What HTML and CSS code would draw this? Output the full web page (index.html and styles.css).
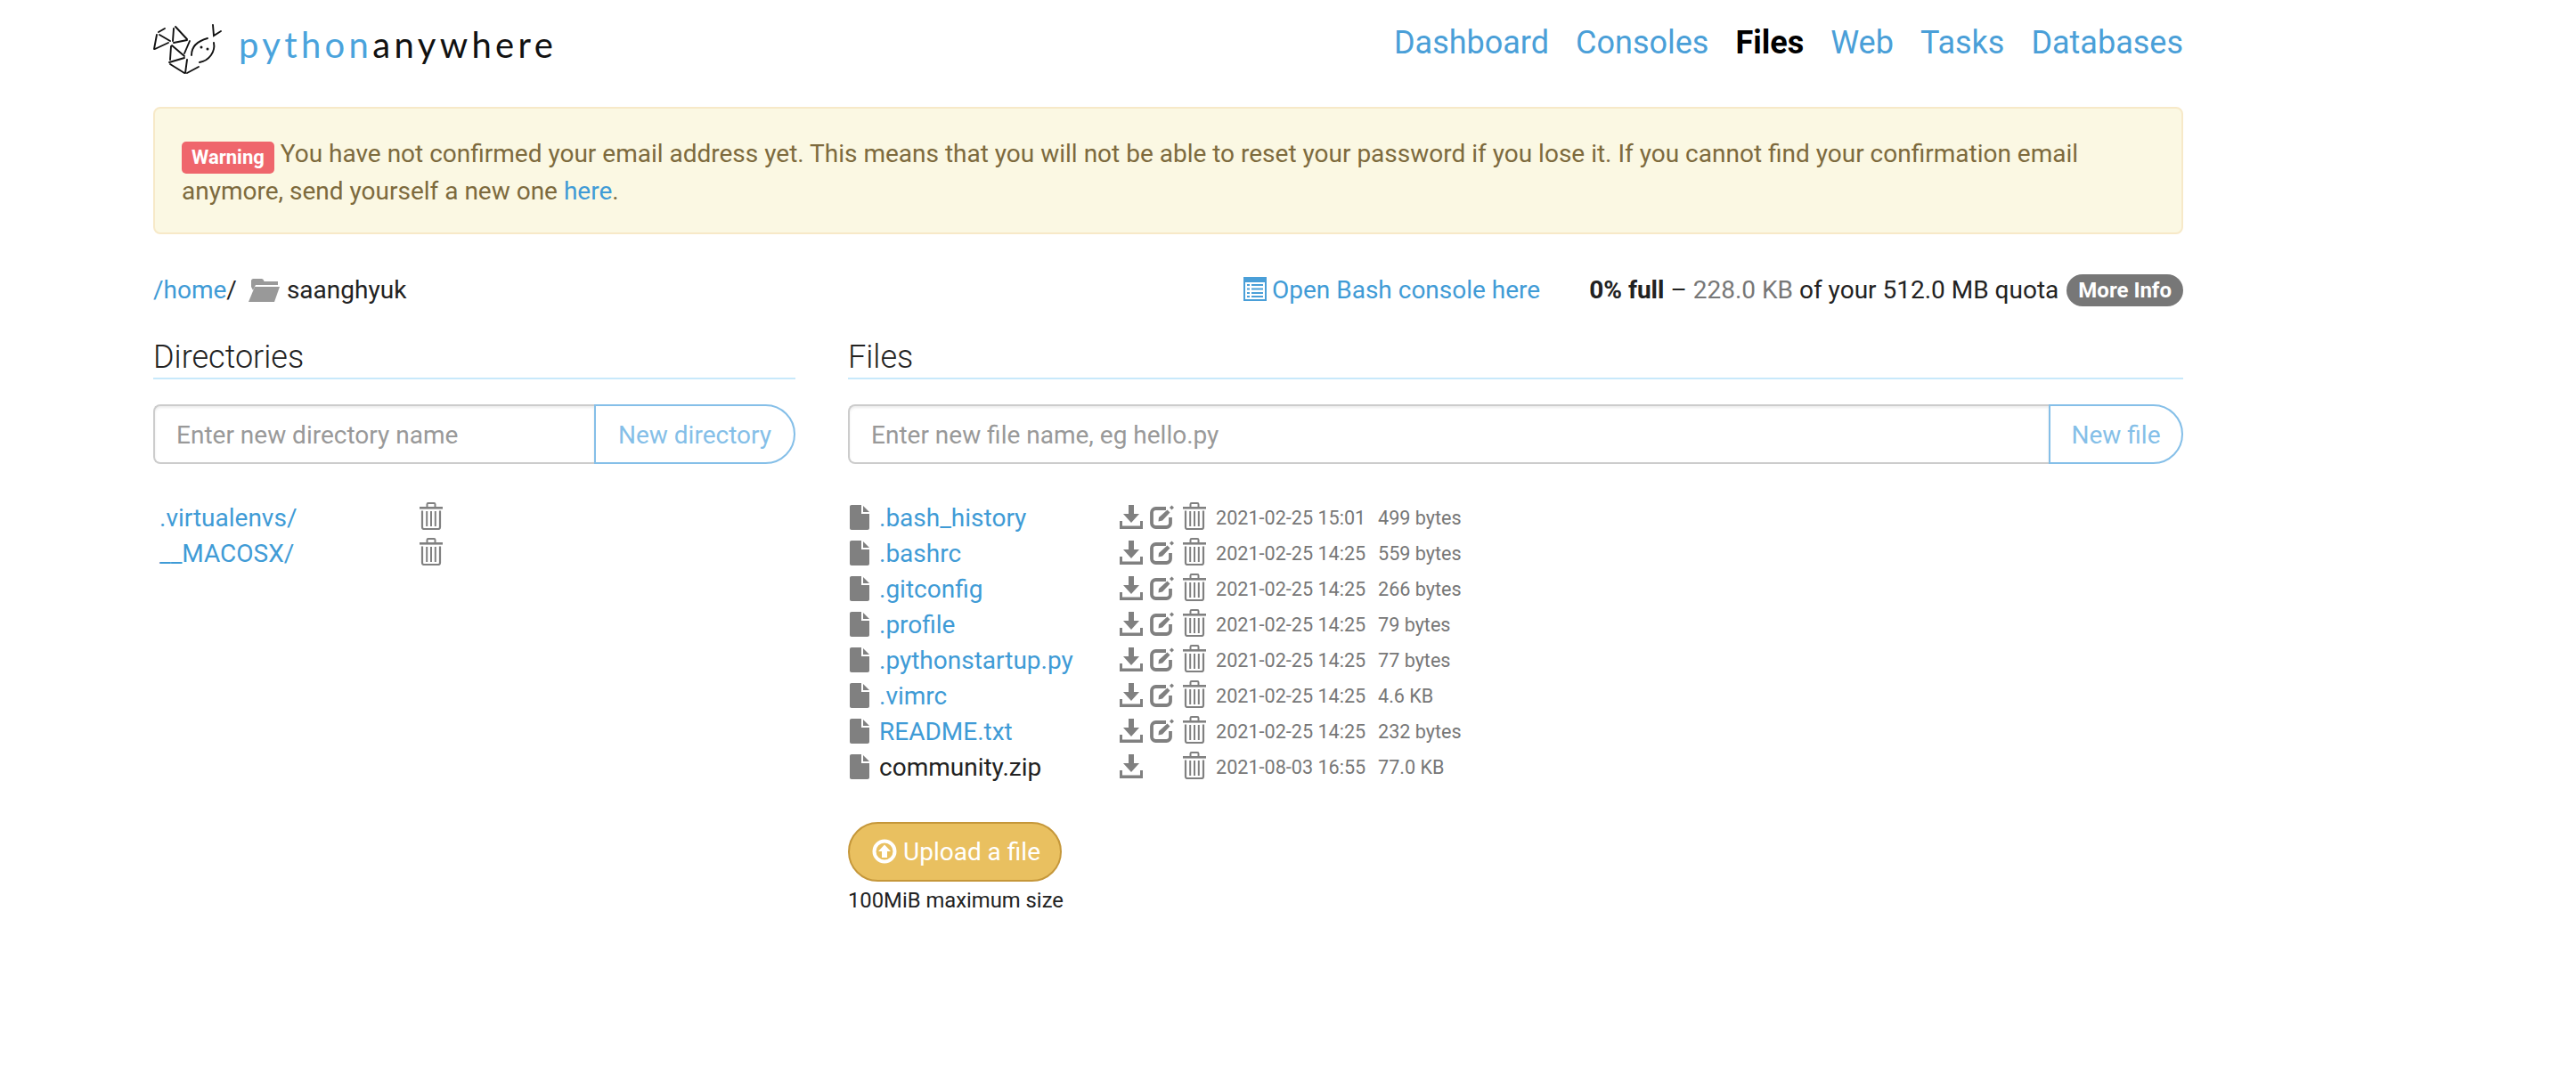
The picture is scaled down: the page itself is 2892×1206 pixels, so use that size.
FILE: index.html
```html
<!DOCTYPE html>
<html lang="en">
<head>
<meta charset="utf-8">
<title>Files - PythonAnywhere</title>
<link rel="stylesheet" href="styles.css">
</head>
<body>
<svg class="defs" width="0" height="0" aria-hidden="true">
  <symbol id="i-trash" viewBox="0 0 26 31">
    <path d="M8.500 5V2.200C8.500 1.400 9 1 9.800 1h6.400c.8 0 1.300.4 1.300 1.200V5" fill="none" stroke="currentColor" stroke-width="2"/>
    <rect x="0" y="5" width="26" height="2.600"/>
    <path d="M3 9.500V28c0 1.300.8 2 2 2h16c1.200 0 2-.7 2-2V9.500" fill="none" stroke="currentColor" stroke-width="2.200"/>
    <rect x="7.200" y="10" width="2" height="17"/><rect x="12" y="10" width="2" height="17"/><rect x="16.800" y="10" width="2" height="17"/>
  </symbol>
  <symbol id="i-download" viewBox="0 0 26 27">
    <path d="M10 0h6v10h6L13 20 4 10h6z"/>
    <path d="M0 18h3v5.500h20V18h3v9H0z"/>
  </symbol>
  <symbol id="i-edit" viewBox="0 0 30 27">
    <path d="M19 4H7.500A4.500 4.500 0 0 0 3 8.500v12A4.500 4.500 0 0 0 7.500 25h12a4.500 4.500 0 0 0 4.500-4.500V14" fill="none" stroke="currentColor" stroke-width="3.800"/>
    <path d="M11 14l9.500-8.500 3 3L15 17.500l-4.500 1z"/>
    <path d="M25.500 5.500l-2.500-2.500 2.500-2.500 2.500 2.500z"/>
  </symbol>
  <symbol id="i-file" viewBox="0 0 22 28">
    <path d="M0 2C0 .8.8 0 2 0h11v10h9v16c0 1.200-.8 2-2 2H2c-1.200 0-2-.8-2-2z"/>
    <path d="M15 1l7 7h-7z"/>
  </symbol>
  <symbol id="i-folder" viewBox="0 0 35 26">
    <path d="M3 7V2.500C3 1 4 0 5.500 0h9C16 0 17 1 17.500 3H33v4H8L5 13 3 9z"/>
    <path d="M7 9h28l-6 17H0z"/>
  </symbol>
  <symbol id="i-list" viewBox="0 0 26 27">
    <path fill-rule="evenodd" d="M0 0h26v27H0zM2 6v19h22V6z"/>
    <path d="M4 8h3v2H4zM9 8h13v2H9zM4 12.500h3v2H4zM9 12.500h13v2H9zM4 17h3v2H4zM9 17h13v2H9zM4 21h3v2H4zM9 21h13v2H9z"/>
  </symbol>
  <symbol id="i-up" viewBox="0 0 28 28">
    <circle cx="14" cy="14" r="11.500" fill="none" stroke="currentColor" stroke-width="4"/>
    <path d="M14 6.500l7 7.500h-4v7h-6v-7H7z"/>
  </symbol>
</svg>

<div class="page">
  <header class="topbar">
    <a class="brand" href="#">
      <svg class="brand-mark" viewBox="0 0 100 70" aria-hidden="true">
        <g fill="none" stroke="#111" stroke-width="1.900" stroke-linecap="round">
          <path d="M13 16L20 12M11 19L8 35M9 35L24 28M14 19L26 26"/>
          <path d="M32 10L45 24M30 12L29 26M30 28L45 25"/>
          <path d="M48 26L42 40M28 31L42 43M27 32L26 47"/>
          <path d="M25 50L42 45M26 52L42 62M45 47L43 62M45 62L58 55"/>
          <path d="M50 42C50 32 57 26 68 23"/>
          <path d="M75 28C77 38 70 48 59 50"/>
          <path d="M74 8L75 20L83 15"/>
        </g>
        <circle cx="61" cy="33" r="1.500" fill="#111"/>
        <circle cx="68" cy="35" r="1.500" fill="#111"/>
      </svg>
      <span class="brand-name"><span class="brand-python">python</span><span class="brand-any">anywhere</span></span>
    </a>
    <nav class="mainnav">
      <a href="#">Dashboard</a>
      <a href="#">Consoles</a>
      <a href="#" class="current">Files</a>
      <a href="#">Web</a>
      <a href="#">Tasks</a>
      <a href="#">Databases</a>
    </nav>
  </header>

  <div class="alert">
    <span class="label-warning">Warning</span> <span>You have not confirmed your email address yet. This means that you will not be able to reset your password if you lose it. If you cannot find your confirmation email</span><br>
    <span>anymore, send yourself a new one</span> <a href="#">here</a>.
  </div>

  <div class="pathbar">
    <div class="crumbs">
      <a href="#">/home</a><span class="sep">/</span>
      <svg class="icon-folder"><use href="#i-folder"/></svg>
      <span>saanghyuk</span>
    </div>
    <div class="pathbar-right">
      <a class="bash" href="#"><svg class="icon-list"><use href="#i-list"/></svg>Open Bash console here</a>
      <div class="quota"><strong>0% full</strong> – <span class="muted">228.0 KB</span> of your 512.0 MB quota<a class="badge" href="#">More Info</a></div>
    </div>
  </div>

  <main class="columns">
    <section>
      <h2 class="section-title">Directories</h2>
      <form class="addform">
        <input class="addinput" type="text" placeholder="Enter new directory name">
        <button class="addbtn dirbtn" type="button">New directory</button>
      </form>
      <ul class="dirlist">
        <li class="dirrow"><a href="#">.virtualenvs/</a><svg class="ic ic-trash"><use href="#i-trash"/></svg></li>
        <li class="dirrow"><a href="#">__MACOSX/</a><svg class="ic ic-trash"><use href="#i-trash"/></svg></li>
      </ul>
    </section>

    <section>
      <h2 class="section-title">Files</h2>
      <form class="addform">
        <input class="addinput" type="text" placeholder="Enter new file name, eg hello.py">
        <button class="addbtn filebtn" type="button">New file</button>
      </form>
      <ul class="filelist">
        <li class="filerow"><svg class="ic ic-file"><use href="#i-file"/></svg><a href="#">.bash_history</a><svg class="ic ic-dl"><use href="#i-download"/></svg><svg class="ic ic-edit"><use href="#i-edit"/></svg><svg class="ic ic-trash"><use href="#i-trash"/></svg><span class="meta">2021-02-25 15:01</span><span class="meta">499 bytes</span></li>
        <li class="filerow"><svg class="ic ic-file"><use href="#i-file"/></svg><a href="#">.bashrc</a><svg class="ic ic-dl"><use href="#i-download"/></svg><svg class="ic ic-edit"><use href="#i-edit"/></svg><svg class="ic ic-trash"><use href="#i-trash"/></svg><span class="meta">2021-02-25 14:25</span><span class="meta">559 bytes</span></li>
        <li class="filerow"><svg class="ic ic-file"><use href="#i-file"/></svg><a href="#">.gitconfig</a><svg class="ic ic-dl"><use href="#i-download"/></svg><svg class="ic ic-edit"><use href="#i-edit"/></svg><svg class="ic ic-trash"><use href="#i-trash"/></svg><span class="meta">2021-02-25 14:25</span><span class="meta">266 bytes</span></li>
        <li class="filerow"><svg class="ic ic-file"><use href="#i-file"/></svg><a href="#">.profile</a><svg class="ic ic-dl"><use href="#i-download"/></svg><svg class="ic ic-edit"><use href="#i-edit"/></svg><svg class="ic ic-trash"><use href="#i-trash"/></svg><span class="meta">2021-02-25 14:25</span><span class="meta">79 bytes</span></li>
        <li class="filerow"><svg class="ic ic-file"><use href="#i-file"/></svg><a href="#">.pythonstartup.py</a><svg class="ic ic-dl"><use href="#i-download"/></svg><svg class="ic ic-edit"><use href="#i-edit"/></svg><svg class="ic ic-trash"><use href="#i-trash"/></svg><span class="meta">2021-02-25 14:25</span><span class="meta">77 bytes</span></li>
        <li class="filerow"><svg class="ic ic-file"><use href="#i-file"/></svg><a href="#">.vimrc</a><svg class="ic ic-dl"><use href="#i-download"/></svg><svg class="ic ic-edit"><use href="#i-edit"/></svg><svg class="ic ic-trash"><use href="#i-trash"/></svg><span class="meta">2021-02-25 14:25</span><span class="meta">4.6 KB</span></li>
        <li class="filerow"><svg class="ic ic-file"><use href="#i-file"/></svg><a href="#">README.txt</a><svg class="ic ic-dl"><use href="#i-download"/></svg><svg class="ic ic-edit"><use href="#i-edit"/></svg><svg class="ic ic-trash"><use href="#i-trash"/></svg><span class="meta">2021-02-25 14:25</span><span class="meta">232 bytes</span></li>
        <li class="filerow"><svg class="ic ic-file"><use href="#i-file"/></svg><span>community.zip</span><svg class="ic ic-dl"><use href="#i-download"/></svg><span></span><svg class="ic ic-trash"><use href="#i-trash"/></svg><span class="meta">2021-08-03 16:55</span><span class="meta">77.0 KB</span></li>
      </ul>
      <button class="upload" type="button"><svg class="icon-up"><use href="#i-up"/></svg>Upload a file</button>
      <p class="maxsize">100MiB maximum size</p>
    </section>
  </main>
</div>
</body>
</html>
```
FILE: styles.css
```css
* { box-sizing: border-box; }
html, body { margin: 0; padding: 0; background: #fff; }
body {
  font-family: Roboto, "Liberation Sans", sans-serif;
  font-size: 28px;
  line-height: 40px;
  color: #222;
}
a { color: #3f9bd6; text-decoration: none; }
.defs { display: block; height: 0; }
.page { width: 2279px; margin-left: 172px; }

.topbar {
  height: 120px;
  display: flex;
  justify-content: space-between;
  align-items: flex-start;
}
.brand { display: flex; align-items: flex-start; margin-left: -7px; }
.brand-mark { width: 100px; height: 70px; margin-top: 20px; flex: none; }
.brand-name {
  font-family: Lato, sans-serif;
  font-weight: 400;
  font-size: 40px;
  line-height: 48px;
  letter-spacing: 4.350px;
  margin: 26px 0 0 3px;
}
.brand-python { color: #4aa3dc; }
.brand-any { color: #111; }
.mainnav { display: flex; gap: 30px; padding-top: 26px; font-size: 36px; line-height: 44px; }
.mainnav a { color: #4a9fd8; }
.mainnav .current { color: #000; font-weight: 700; }

.alert {
  height: 143px;
  padding: 31px 30px 0;
  background: #fbf8e3;
  border: 2px solid #f7e9c8;
  border-radius: 8px;
  color: #7d6a3d;
}
.label-warning {
  display: inline-block;
  height: 36px;
  padding: 0 11px;
  background: #ef666c;
  border-radius: 5px;
  color: #fff;
  font-size: 22px;
  font-weight: 700;
  line-height: 36px;
  vertical-align: -2px;
}

.pathbar {
  display: flex;
  justify-content: space-between;
  align-items: center;
  height: 36px;
  margin-top: 45px;
}
.crumbs { display: flex; align-items: center; }
.sep { color: #222; }
.icon-folder { width: 35px; height: 26px; margin: 0 8px 0 13px; color: #999; fill: currentColor; }
.pathbar-right { display: flex; align-items: center; gap: 55px; }
.bash { display: flex; align-items: center; }
.icon-list { width: 26px; height: 27px; margin-right: 6px; color: #4a9fd8; fill: currentColor; position: relative; top: -2px; }
.quota { display: flex; align-items: center; gap: 0; white-space: pre-wrap; }
.muted { color: #777; }
.badge {
  height: 36px;
  margin-left: 9px;
  padding: 0 13px;
  border-radius: 18px;
  background: #777;
  color: #fff;
  font-size: 24px;
  font-weight: 700;
  line-height: 36px;
}

.columns { display: grid; grid-template-columns: 721px 1499px; column-gap: 59px; margin-top: 37px; }
.section-title {
  margin: 0;
  height: 45px;
  border-bottom: 2px solid #c8e9fb;
  font-size: 36px;
  font-weight: 300;
  line-height: 40px;
  color: #222;
}
.addform { display: flex; margin-top: 28px; height: 67px; }
.addinput {
  flex: 1;
  min-width: 0;
  height: 67px;
  padding: 2px 24px 0;
  border: 2px solid #ccc;
  border-right: 0;
  border-radius: 8px 0 0 8px;
  box-shadow: inset 0 2px 3px rgba(0, 0, 0, .08);
  background: #fff;
  font-family: inherit;
  font-size: 28px;
  color: #222;
}
.addinput::placeholder { color: #999; opacity: 1; }
.addbtn {
  flex: none;
  height: 67px;
  padding: 2px 0 0;
  border: 2px solid #85bfe8;
  border-radius: 0 34px 34px 0;
  background: #fff;
  color: #85bfe8;
  font-family: inherit;
  font-size: 28px;
}
.dirbtn { width: 226px; }
.filebtn { width: 151px; }

.dirlist, .filelist { list-style: none; margin: 0; padding: 0; }
.dirlist { margin-top: 41px; }
.dirrow {
  display: grid;
  grid-template-columns: 292px 26px;
  align-items: center;
  height: 40px;
  padding-left: 7px;
}
.filelist { margin-top: 41px; }
.filerow {
  display: grid;
  grid-template-columns: 33px 270px 33px 38px 37px 182px auto;
  justify-content: start;
  align-items: center;
  height: 40px;
  padding-left: 2px;
}
.ic { display: block; color: #808080; fill: currentColor; }
.ic-trash { width: 26px; height: 31px; margin-bottom: 6px; }
.ic-dl { width: 26px; height: 27px; margin-bottom: 3px; }
.ic-edit { width: 30px; height: 27px; margin-bottom: 3px; }
.ic-file { width: 22px; height: 28px; margin-bottom: 3px; }
.meta { font-size: 21.600px; color: #777; }

.upload {
  display: flex;
  align-items: center;
  width: 240px;
  height: 67px;
  margin-top: 41px;
  padding: 0 0 0 25px;
  border: 2px solid #c5973a;
  border-radius: 34px;
  background: #e9c060;
  color: #fff;
  font-family: inherit;
  font-size: 28px;
}
.icon-up { width: 28px; height: 28px; margin-right: 7px; color: #fff; fill: currentColor; position: relative; top: -1px; }
.maxsize { margin: 1px 0 0; font-size: 23.800px; line-height: 40px; color: #222; }
```
